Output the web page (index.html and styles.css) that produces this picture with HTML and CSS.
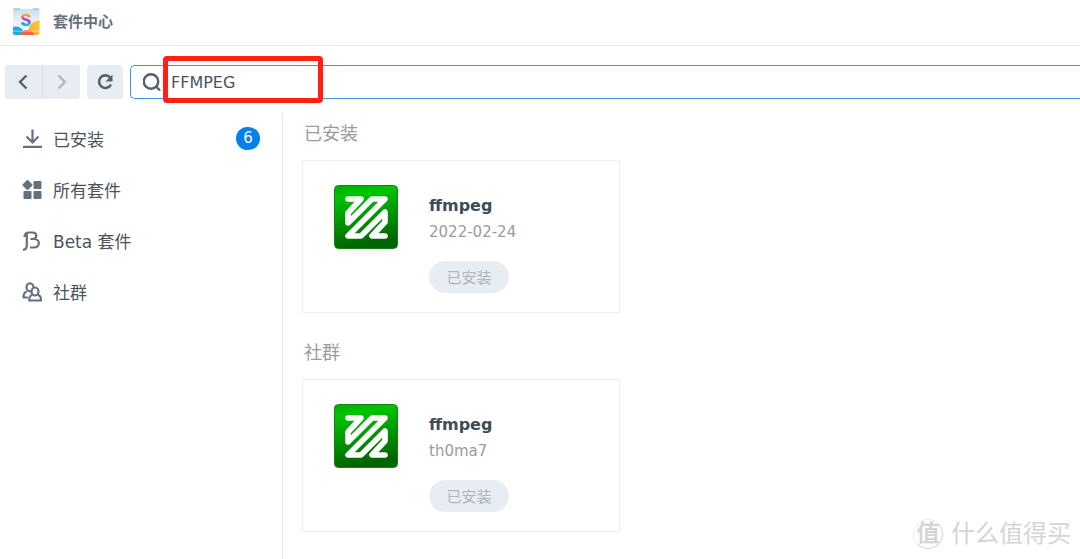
FILE: index.html
```html
<!DOCTYPE html>
<html lang="zh-CN">
<head>
    <meta charset="UTF-8">
    <meta name="viewport" content="width=device-width, initial-scale=1.0">
    <title>套件中心</title>
    <link rel="stylesheet" href="styles.css">
</head>
<body>
    <svg class="defs" width="0" height="0" aria-hidden="true">
        <defs>
            <linearGradient id="green" x1="0" y1="0" x2="0.2" y2="1">
                <stop offset="0" stop-color="#00ac00"/>
                <stop offset="0.2" stop-color="#00c400"/>
                <stop offset="1" stop-color="#006400"/>
            </linearGradient>
            <symbol id="ffmpeg" viewBox="0 0 64 64">
                <rect x="0.5" y="0.5" width="63" height="63" rx="4" fill="url(#green)" stroke="#168016"/>
                <path d="M14 14H27L14 28V38L38 14H51L14 51H27L51 27V37L38 51H51" fill="none" stroke="#fff" stroke-width="5.600" stroke-linecap="round" stroke-linejoin="round"/>
            </symbol>
        </defs>
    </svg>

    <header class="titlebar">
        <svg class="logo" width="28" height="28" viewBox="0 0 28 28" aria-hidden="true">
            <defs>
                <linearGradient id="bag" x1="0" y1="0" x2="0" y2="1">
                    <stop offset="0" stop-color="#c4e0f2"/>
                    <stop offset="0.5" stop-color="#eaf3f8"/>
                    <stop offset="1" stop-color="#f4f8fa"/>
                </linearGradient>
                <linearGradient id="sgrad" x1="0" y1="0" x2="0" y2="1">
                    <stop offset="0" stop-color="#ffb02b"/>
                    <stop offset="0.35" stop-color="#f24291"/>
                    <stop offset="0.6" stop-color="#7a4df0"/>
                    <stop offset="1" stop-color="#19c7c0"/>
                </linearGradient>
                <linearGradient id="sun" x1="1" y1="0" x2="0" y2="1">
                    <stop offset="0" stop-color="#fdd24a"/>
                    <stop offset="1" stop-color="#f9a524"/>
                </linearGradient>
                <clipPath id="bagclip"><path d="M1 1H27.500V25Q27.500 27 25.500 27H3Q1 27 1 25Z"/></clipPath>
            </defs>
            <g clip-path="url(#bagclip)">
                <path d="M1 1H28V27H1Z" fill="url(#bag)"/>
                <circle cx="27" cy="23" r="10.500" fill="url(#sun)"/>
                <circle cx="4" cy="27" r="8.500" fill="#20a8ee"/>
                <ellipse cx="15" cy="27" rx="7" ry="5" fill="#f4693a"/>
                <path d="M1 22.500H28V24H1Z" fill="#fff" opacity="0.3"/>
            </g>
            <path d="M2 1H8M21 1H26.500" stroke="#7fa9c0"/>
            <path d="M17.500 9C16.500 6 10.500 6 10.500 9C10.500 12.500 17.500 10.500 17.500 14.500C17.500 18 11 17.500 10 14.500" fill="none" stroke="url(#sgrad)" stroke-width="2.600"/>
        </svg>
        <h1 class="title">套件中心</h1>
    </header>

    <div class="toolbar">
        <div class="nav-buttons">
            <button class="tool" aria-label="后退">
                <svg width="18" height="18" viewBox="0 0 18 18" fill="none" stroke="#56616d" stroke-width="2.400"><path d="M11.500 2.500L5 9L11.500 15.500"/></svg>
            </button>
            <button class="tool" aria-label="前进" disabled>
                <svg width="18" height="18" viewBox="0 0 18 18" fill="none" stroke="#afb6be" stroke-width="2.200"><path d="M5.500 2.500L12 9L5.500 15.500"/></svg>
            </button>
        </div>
        <button class="tool refresh" aria-label="刷新">
            <svg width="18" height="18" viewBox="0 0 18 18"><path d="M14.500 5A6.300 6.300 0 1 0 15 11.500" fill="none" stroke="#56616d" stroke-width="2.600"/><path d="M16.500 1.500V8.500H9.500Z" fill="#56616d"/></svg>
        </button>
        <div class="search">
            <svg width="20" height="20" viewBox="0 0 20 20" fill="none" stroke="#56616d" stroke-width="2.400" aria-hidden="true"><circle cx="8" cy="9.500" r="7.200"/><path d="M13 14.500L17 18.500"/></svg>
            <input type="text" class="search-input" aria-label="搜索" value="FFMPEG">
            <div class="highlight"></div>
        </div>
    </div>

    <div class="main">
        <nav class="sidebar">
            <a class="item" href="#">
                <svg width="20" height="20" viewBox="0 0 20 20" fill="none" stroke="#66717c" stroke-width="2.200" aria-hidden="true"><path d="M10.500 0.500V13M4.500 7.500L10.500 13.500L16.500 7.500M1 17.800H20"/></svg>
                <span>已安装</span>
                <span class="badge">6</span>
            </a>
            <a class="item" href="#">
                <svg width="20" height="20" viewBox="0 0 20 20" fill="#66717c" aria-hidden="true"><path d="M5.500 1L9.500 5L5.500 9L1.500 5Z" stroke="#66717c" stroke-width="2" stroke-linejoin="round"/><rect x="11.500" y="1" width="8" height="8" rx="1"/><rect x="1.500" y="11" width="8" height="8" rx="1"/><rect x="11.500" y="11" width="8" height="8" rx="1"/></svg>
                <span>所有套件</span>
            </a>
            <a class="item" href="#">
                <svg width="20" height="20" viewBox="0 0 20 20" fill="none" stroke="#66717c" stroke-width="2.200" aria-hidden="true"><path d="M1 18.800C4 18.800 4.800 17 4.800 14V2"/><path d="M2.500 6C2.500 3 4 1.500 7 1.500H10.500C15.500 1.500 15.500 8 10.500 8H8.500H12C18.500 8 18.500 16.500 12 16.500H8"/></svg>
                <span>Beta 套件</span>
            </a>
            <a class="item" href="#">
                <svg width="20" height="20" viewBox="0 0 20 20" fill="none" stroke="#66717c" stroke-width="2.200" stroke-linejoin="round" aria-hidden="true"><path d="M5 9.500C2 10 1.500 12.500 1.500 15.500H6"/><ellipse cx="8" cy="5.300" rx="3.500" ry="4"/><path d="M10 13C7.500 13.500 7.200 15.500 7.200 18.500H19C19 15.500 18.500 13.500 16 13" fill="#fff"/><ellipse cx="13" cy="9.500" rx="3.500" ry="4" fill="#fff"/></svg>
                <span>社群</span>
            </a>
        </nav>

        <main class="content">
            <section class="section">
                <h2 class="heading">已安装</h2>
                <div class="card">
                    <svg class="package-icon" width="64" height="64" aria-hidden="true"><use href="#ffmpeg"/></svg>
                    <div class="info">
                        <h3 class="name">ffmpeg</h3>
                        <p class="detail">2022-02-24</p>
                        <button class="status" disabled>已安装</button>
                    </div>
                </div>
            </section>
            <section class="section">
                <h2 class="heading">社群</h2>
                <div class="card">
                    <svg class="package-icon" width="64" height="64" aria-hidden="true"><use href="#ffmpeg"/></svg>
                    <div class="info">
                        <h3 class="name">ffmpeg</h3>
                        <p class="detail">th0ma7</p>
                        <button class="status" disabled>已安装</button>
                    </div>
                </div>
            </section>
        </main>
    </div>

    <div class="watermark"><span class="mark">值</span><span>什么值得买</span></div>
</body>
</html>
```
FILE: styles.css
```css
* {
    box-sizing: border-box;
}
body {
    margin: 0;
    min-height: 100vh;
    display: flex;
    flex-direction: column;
    overflow: hidden;
    background-color: #fff;
    color: #414b55;
    font-family: "DejaVu Sans", "Noto Sans CJK SC", sans-serif;
}
h1, h2, h3, p {
    margin: 0;
}
svg {
    flex: none;
}
button, input {
    font-family: inherit;
}
.defs {
    position: absolute;
}
.titlebar {
    display: flex;
    align-items: center;
    gap: 13px;
    height: 46px;
    padding: 0 12px 2px;
    border-bottom: 1px solid #e4e8ec;
}
.title {
    color: #66707a;
    font-size: 15px;
    font-weight: 700;
    line-height: 20px;
}

/* Toolbar */
.toolbar {
    display: flex;
    gap: 7px;
    padding: 19px 0 14px 5px;
}
.nav-buttons {
    display: flex;
    gap: 1px;
    border-radius: 4px;
    overflow: hidden;
    background-color: #d8dfe7;
}
.tool {
    display: flex;
    align-items: center;
    justify-content: center;
    width: 37px;
    height: 34px;
    padding: 0;
    border: none;
    background-color: #e8edf4;
}
.refresh {
    width: 36px;
    border-radius: 4px;
}
.search {
    position: relative;
    flex: 1;
    display: flex;
    align-items: center;
    gap: 8px;
    height: 34px;
    padding-left: 12px;
    border: 1px solid #3a97ec;
    border-right: none;
    border-radius: 5px 0 0 5px;
}
.search-input {
    flex: 1;
    min-width: 0;
    padding: 0;
    border: none;
    outline: none;
    background: none;
    color: #4a545e;
    font-size: 16px;
}
.highlight {
    position: absolute;
    left: 32px;
    top: -10px;
    width: 160px;
    height: 47px;
    border: 5px solid #fd2015;
    border-radius: 4px;
    pointer-events: none;
}

/* Sidebar */
.main {
    flex: 1;
    display: flex;
}
.sidebar {
    width: 283px;
    flex: none;
    border-right: 1px solid #dfe6ec;
}
.item {
    display: flex;
    align-items: center;
    gap: 11px;
    height: 51px;
    padding: 0 22px;
    color: #4a545e;
    font-size: 17px;
    text-decoration: none;
}
.badge {
    margin-left: auto;
    width: 24px;
    border-radius: 12px;
    background-color: #057feb;
    color: #fff;
    font-size: 15px;
    line-height: 23px;
    text-align: center;
}

/* Packages */
.content {
    flex: 1;
    padding-left: 19px;
}
.section {
    margin-bottom: 19px;
}
.heading {
    padding: 7px 2px 12px;
    color: #979ca3;
    font-size: 18px;
    font-weight: 400;
    line-height: 28px;
}
.card {
    display: flex;
    gap: 31px;
    max-width: 318px;
    padding: 24px 31px 19px;
    border: 1px solid #edf0f2;
}
.info {
    padding-top: 7px;
}
.name {
    font-size: 16px;
    line-height: 28px;
}
.detail {
    color: #979ca3;
    font-size: 15px;
    line-height: 24px;
}
.status {
    display: block;
    width: 80px;
    height: 32px;
    margin-top: 17px;
    padding: 0 0 2px;
    border: none;
    border-radius: 16px;
    background-color: #e8edf4;
    color: #aeb4bc;
    font-size: 15px;
}

.watermark {
    position: absolute;
    right: 9px;
    bottom: 9px;
    display: flex;
    align-items: center;
    gap: 8px;
    color: #d4d4d4;
    font-size: 24px;
    line-height: 32px;
}
.mark {
    width: 30px;
    height: 30px;
    border: 1px solid #ececec;
    border-right-color: #cfcfcf;
    border-bottom-color: #cfcfcf;
    border-radius: 50%;
    font-size: 23px;
    font-weight: 700;
    line-height: 27px;
    text-align: center;
}
```
